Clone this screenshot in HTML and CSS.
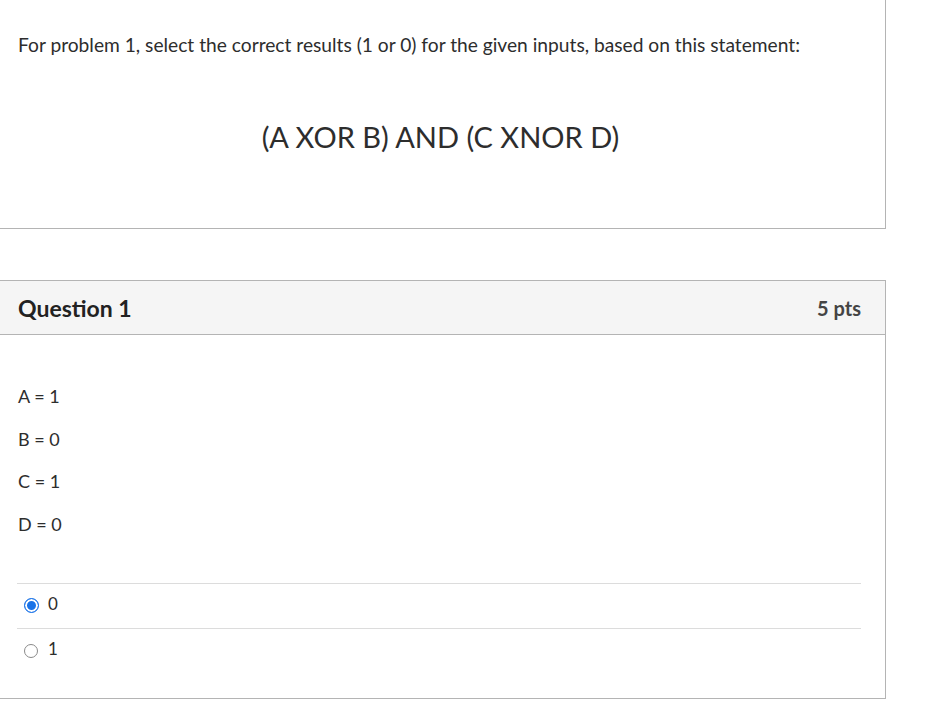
FILE: index.html
```html
<!DOCTYPE html>
<html>
<head>
<meta charset="utf-8">
<link rel="stylesheet" href="styles.css">
</head>
<body>
<div class="page">
  <section class="intro">
    <p class="intro-text">For problem 1, select the correct results (1 or 0) for the given inputs, based on this statement:</p>
    <p class="formula">(A XOR B) AND (C XNOR D)</p>
  </section>

  <section class="question">
    <header class="q-head">
      <h2 class="q-title">Question 1</h2>
      <span class="q-pts">5 pts</span>
    </header>
    <div class="q-body">
      <div class="inputs">
        <p>A = 1</p>
        <p>B = 0</p>
        <p>C = 1</p>
        <p>D = 0</p>
      </div>
      <div class="answers">
        <label class="answer"><span class="radio checked"></span><span class="ans-text">0</span></label>
        <label class="answer"><span class="radio"></span><span class="ans-text">1</span></label>
      </div>
    </div>
  </section>
</div>
</body>
</html>
```

FILE: styles.css
```css
html, body {
  margin: 0;
  padding: 0;
  background: #fff;
}
body {
  font-family: Lato, "Open Sans", sans-serif;
  color: #2d2d2d;
  width: 926px;
  height: 718px;
  overflow: hidden;
}
.page {
  width: 886px;
  display: flex;
  flex-direction: column;
}
.intro {
  height: 229px;
  box-sizing: border-box;
  border-right: 1px solid #b4b4b4;
  border-bottom: 1px solid #b4b4b4;
  padding: 33px 0 0 18px;
}
.intro-text {
  margin: 0;
  font-size: 19.2px;
  line-height: 24px;
}
.formula {
  margin: 63px 0 0 0;
  font-size: 29px;
  line-height: 34px;
  text-align: center;
  padding-right: 22px;
}
.question {
  margin-top: 51px;
  border-top: 1px solid #b4b4b4;
  border-right: 1px solid #b4b4b4;
  border-bottom: 1px solid #b4b4b4;
  height: 419px;
  box-sizing: border-box;
  display: flex;
  flex-direction: column;
}
.q-head {
  height: 54px;
  box-sizing: border-box;
  background: #f5f5f5;
  border-bottom: 1px solid #b4b4b4;
  display: flex;
  align-items: center;
  justify-content: space-between;
  padding: 0 24px 0 18px;
}
.q-title {
  margin: 0;
  font-size: 23px;
  font-weight: 700;
  color: #222;
}
.q-pts {
  font-size: 20px;
  font-weight: 700;
  color: #444;
}
.q-body {
  padding: 49px 24px 0 17px;
}
.inputs {
  display: flex;
  flex-direction: column;
  gap: 18.5px;
  padding-left: 1px;
}
.inputs p {
  margin: 0;
  font-size: 18px;
  line-height: 24px;
}
.answers {
  margin-top: 47px;
  border-top: 1px solid #dcdcdc;
}
.answer {
  display: flex;
  align-items: center;
  height: 44px;
  border-bottom: 1px solid #dcdcdc;
  padding-left: 7px;
  font-size: 17px;
}
.answer:last-child {
  border-bottom: none;
}
.radio {
  width: 14px;
  height: 14px;
  box-sizing: border-box;
  border: 1px solid #8a8a8a;
  border-radius: 50%;
  margin-right: 10px;
  background: #fff;
}
.radio.checked {
  width: 15px;
  height: 15px;
  border: 1px solid #1a73e8;
  background: #1a73e8;
  box-shadow: inset 0 0 0 2px #fff;
  margin-right: 9px;
}
.ans-text {
  line-height: 24px;
  margin-top: -4px;
}
```
